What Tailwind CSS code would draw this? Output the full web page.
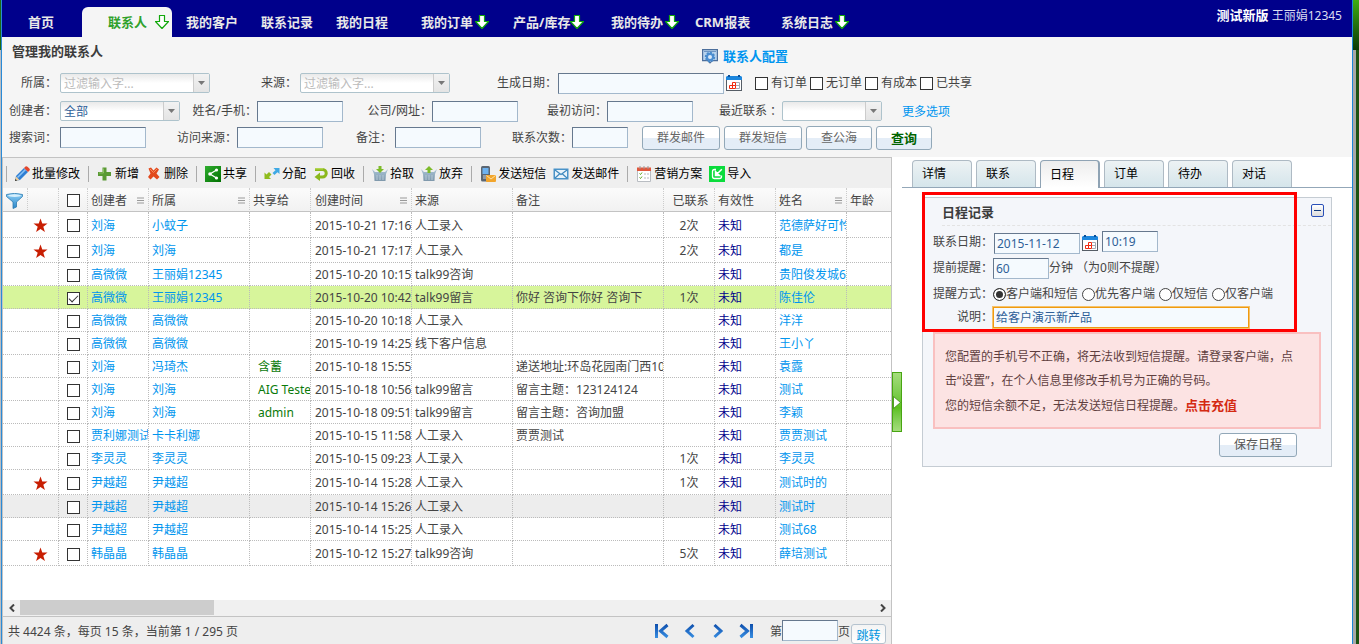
<!DOCTYPE html>
<html lang="zh-CN">
<head>
<meta charset="utf-8">
<title>管理我的联系人</title>
<script src="https://cdn.jsdelivr.net/npm/@tailwindcss/browser@4"></script>
</head>
<body class="flex min-h-screen bg-white font-['Noto_Sans','Noto_Sans_CJK_SC',sans-serif] text-[12px] leading-4 text-[#444] overflow-hidden">

<svg class="absolute size-0" aria-hidden="true">
  <defs>
    <linearGradient id="gBlue" x1="0" y1="0" x2="0" y2="1"><stop offset="0" stop-color="#8fd0f7"/><stop offset="1" stop-color="#2a86c8"/></linearGradient>
    <linearGradient id="gPager" x1="0" y1="0" x2="0" y2="16" gradientUnits="userSpaceOnUse"><stop offset="0" stop-color="#0a49a8"/><stop offset="1" stop-color="#3b93e6"/></linearGradient>
    <linearGradient id="gShare" x1="0" y1="0" x2="1" y2="1"><stop offset="0" stop-color="#2fae2f"/><stop offset="1" stop-color="#027002"/></linearGradient>
    <linearGradient id="gBin" x1="0" y1="0" x2="0" y2="1"><stop offset="0" stop-color="#a9c3d6"/><stop offset="1" stop-color="#7f98ab"/></linearGradient>
  </defs>
  <symbol id="down" viewBox="0 0 14 14"><path d="M4.5.5h5v6h4L7 13.5.5 6.5h4z" stroke="#12a80c" stroke-width="1.2" stroke-linejoin="round"/></symbol>
  <symbol id="cal" viewBox="0 0 16 16"><rect x=".5" y="3.5" width="15" height="12" fill="#fff" stroke="#555d66"/><path d="M0 2l1-1h14l1 1v3H0z" fill="#1c86dd"/><path d="M2 0h2v2H2zM12 0h2v2h-2z" fill="#0c4e96"/><path d="M3.500 10.500h3v3h-3zM6.500 7.500h3v3h-3zM6.500 10.500h3v3h-3z" fill="#fff" stroke="#f22a10" stroke-width="1"/><path d="M10 7.500h3.500v6H10M10 10.500h3.500" fill="none" stroke="#a4abb5" stroke-width="1"/></symbol>
  <symbol id="star" viewBox="0 0 16 16"><path d="M8 .5l1.900 5.300 5.600.1-4.500 3.400 1.700 5.700L8 11.800 3.300 15 5 9.300.5 5.900l5.600-.1z" fill="#c81e02"/></symbol>
  <symbol id="menu" viewBox="0 0 7 7"><path d="M0 1h7M0 3.500h7M0 6h7" stroke="#999" stroke-width="1"/></symbol>
</svg>

<!-- left window edge -->
<div class="flex w-[2px] shrink-0 flex-col border-r border-[#2a8ad6]">
  <div class="h-[50px] bg-[#1d6b10]"></div>
  <div class="flex-1 bg-[#b9bec4]"></div>
</div>

<div class="flex min-w-0 flex-1 flex-col">
  <!-- top navigation -->
  <header class="flex h-[37px] bg-[#00008b] text-white">
    <nav class="flex min-w-0 flex-1 items-end text-[13px] font-bold leading-[30px] whitespace-nowrap [&>a]:h-[30px] [&>a]:shrink-0 [&>a]:flex [&>a]:items-center [&_svg]:size-[14px] [&_svg]:fill-white">
      <a href="#" class="w-[80px] pl-[26px] text-[#e8e8e8]">首页</a>
      <a href="#" class="w-[90px] justify-end gap-[8px] rounded-t-[6px] bg-[#f5f5f5] pr-[3px] text-[#2fa12b]">联系人<svg><use href="#down"/></svg></a>
      <a href="#" class="w-[75px] pl-[14px] text-[#e8e8e8]">我的客户</a>
      <a href="#" class="w-[75px] pl-[14px] text-[#e8e8e8]">联系记录</a>
      <a href="#" class="w-[75px] pl-[14px] text-[#e8e8e8]">我的日程</a>
      <a href="#" class="w-[102px] gap-[2px] pl-[24px] text-[#e8e8e8]">我的订单<svg><use href="#down"/></svg></a>
      <a href="#" class="w-[98px] pl-[14px] text-[#e8e8e8]">产品/库存<svg><use href="#down"/></svg></a>
      <a href="#" class="w-[84px] gap-[2px] pl-[14px] text-[#e8e8e8]">我的待办<svg><use href="#down"/></svg></a>
      <a href="#" class="w-[86px] pl-[14px] text-[#e8e8e8]">CRM报表</a>
      <a href="#" class="w-[84px] gap-[2px] pl-[14px] text-[#e8e8e8]">系统日志<svg><use href="#down"/></svg></a>
    </nav>
    <div class="pt-[7px] pr-[10px] whitespace-nowrap text-[#dcdcf0]"><b class="text-[13px] text-white">测试新版</b> 王丽娟12345</div>
  </header>

  <!-- search form -->
  <form class="flex h-[120px] flex-col bg-[#f5f5f5] whitespace-nowrap [&_input[type=text]]:border [&_input[type=text]]:border-t-[#66788e] [&_input[type=text]]:border-l-[#66788e] [&_input[type=text]]:border-r-[#a3b8cc] [&_input[type=text]]:border-b-[#a3b8cc] [&_input[type=text]]:h-[21px] [&_input[type=text]]:bg-[#f5fafe] [&_input[type=text]]:px-1 [&_label]:shrink-0">
    <div class="flex h-[32px] items-center">
      <h1 class="w-[700px] pb-[4px] pl-[10px] text-[13px] font-bold text-[#3c3c3c]">管理我的联系人</h1>
      <a href="#" class="flex items-center gap-[5px] pt-[6px] text-[13px] font-bold text-[#0095f0]">
        <svg class="h-[15px] w-[16px]" viewBox="0 0 16 15"><path d="M.6.6h14.800v11h-5L8 14l-2.400-2.400h-5z" fill="#b9d4ee" stroke="#4d6f9c" stroke-width="1.200"/><path d="M2 2.500h12" stroke="#6e95c4"/><circle cx="8" cy="8" r="4.200" fill="#4d8fd3" stroke="#4a8ccc" stroke-dasharray="2 1.200" stroke-width="2"/><circle cx="8" cy="8" r="2" fill="#dbeaf8"/></svg>联系人配置</a>
    </div>
    <div class="flex h-[28px] items-center">
      <label for="owner" class="w-[58px] pr-[3px] text-right">所属：</label>
      <span class="flex h-[20px] w-[150px] rounded-[2px] border border-[#aec3cc] bg-linear-to-b from-[#e9e9e9] via-white to-white">
        <input id="owner" type="search" placeholder="过滤输入字..." class="min-w-0 flex-1 bg-transparent pt-[2px] pl-[3px] outline-none placeholder:text-[#bbb]">
        <button type="button" aria-label="展开所属" class="flex w-[16px] items-center justify-center border-l border-[#ccc] bg-linear-to-b from-[#f2f2f2] to-[#e4e4e4]"><svg class="h-[4px] w-[7px]" viewBox="0 0 7 4"><path d="M0 0h7L3.500 4z" fill="#777"/></svg></button>
      </span>
      <label for="src" class="w-[90px] pr-[3px] text-right">来源：</label>
      <span class="flex h-[20px] w-[150px] rounded-[2px] border border-[#aec3cc] bg-linear-to-b from-[#e9e9e9] via-white to-white">
        <input id="src" type="search" placeholder="过滤输入字..." class="min-w-0 flex-1 bg-transparent pt-[2px] pl-[3px] outline-none placeholder:text-[#bbb]">
        <button type="button" aria-label="展开来源" class="flex w-[16px] items-center justify-center border-l border-[#ccc] bg-linear-to-b from-[#f2f2f2] to-[#e4e4e4]"><svg class="h-[4px] w-[7px]" viewBox="0 0 7 4"><path d="M0 0h7L3.500 4z" fill="#777"/></svg></button>
      </span>
      <label for="made" class="w-[108px] pr-[1px] text-right">生成日期：</label>
      <input id="made" type="text" class="w-[166px]">
      <button type="button" aria-label="选择日期" class="ml-[2px]"><svg class="size-[16px]"><use href="#cal"/></svg></button>
      <span class="ml-[13px] flex gap-[3px] [&>label]:flex [&>label]:items-center [&>label]:gap-[3px] [&_input]:size-[13px] [&_input]:appearance-none [&_input]:border [&_input]:border-[#333] [&_input]:bg-white">
        <label><input type="checkbox">有订单</label>
        <label><input type="checkbox">无订单</label>
        <label><input type="checkbox">有成本</label>
        <label><input type="checkbox">已共享</label>
      </span>
    </div>
    <div class="flex h-[28px] items-center">
      <label for="creator" class="w-[58px] pr-[3px] text-right">创建者：</label>
      <span class="flex h-[20px] w-[120px] rounded-[2px] border border-[#aec3cc] bg-linear-to-b from-[#e9e9e9] via-white to-white">
        <select id="creator" class="min-w-0 flex-1 appearance-none bg-transparent pt-[2px] pl-[3px] text-[#2f5f98]"><option>全部</option></select>
        <span class="flex w-[16px] items-center justify-center border-l border-[#ccc] bg-linear-to-b from-[#f2f2f2] to-[#e4e4e4]"><svg class="h-[4px] w-[7px]" viewBox="0 0 7 4"><path d="M0 0h7L3.500 4z" fill="#777"/></svg></span>
      </span>
      <label for="name" class="w-[77px] text-right">姓名/手机：</label>
      <input id="name" type="text" class="w-[86px]">
      <label for="comp" class="w-[89px] text-right">公司/网址：</label>
      <input id="comp" type="text" class="w-[86px]">
      <label for="first" class="w-[89px] text-right">最初访问：</label>
      <input id="first" type="text" class="w-[86px]">
      <label for="recent" class="w-[89px] text-right">最近联系 ：</label>
      <span class="flex h-[20px] w-[100px] rounded-[2px] border border-[#aec3cc] bg-linear-to-b from-[#e9e9e9] via-white to-white">
        <select id="recent" class="min-w-0 flex-1 appearance-none bg-transparent"><option></option></select>
        <span class="flex w-[16px] items-center justify-center border-l border-[#ccc] bg-linear-to-b from-[#f2f2f2] to-[#e4e4e4]"><svg class="h-[4px] w-[7px]" viewBox="0 0 7 4"><path d="M0 0h7L3.500 4z" fill="#777"/></svg></span>
      </span>
      <a href="#" class="ml-[20px] pt-[2px] text-[#0095f0]">更多选项</a>
    </div>
    <div class="flex h-[25px] items-center [&_button]:h-[24px] [&_button]:rounded-[3px] [&_button]:border [&_button]:border-[#92a8b8] [&_button]:bg-linear-to-b [&_button]:from-white [&_button]:from-50% [&_button]:to-[#e4edf7] [&_button]:to-50%">
      <label for="kw" class="w-[58px] pr-[3px] text-right">搜索词：</label>
      <input id="kw" type="text" class="w-[86px]">
      <label for="visit" class="w-[91px] text-right">访问来源：</label>
      <input id="visit" type="text" class="w-[86px]">
      <label for="memo" class="w-[72px] pr-[3px] text-right">备注：</label>
      <input id="memo" type="text" class="w-[86px]">
      <label for="times" class="w-[91px] text-right">联系次数：</label>
      <input id="times" type="text" class="w-[56px]">
      <div class="ml-[14px] flex gap-[4px] text-[#666]">
        <button type="button" class="w-[78px]">群发邮件</button>
        <button type="button" class="w-[78px]">群发短信</button>
        <button type="button" class="w-[66px]">查公海</button>
        <button type="button" class="w-[56px] text-[13px] font-bold text-[#006400]">查询</button>
      </div>
    </div>
  </form>

  <main class="grid flex-1 grid-cols-[890fr_460fr]">
    <!-- contact grid -->
    <section class="relative flex min-w-0 flex-col border border-b-0 border-[#c3c3c3]">
      <div class="flex h-[30px] items-center gap-[7px] bg-[#efefef] pt-[1px] pl-[3px] whitespace-nowrap text-black [&>button]:flex [&>button]:shrink-0 [&>button]:items-center [&>button]:gap-[2px] [&_svg]:size-[16px] [&>i]:mx-px [&>i]:h-[16px] [&>i]:w-px [&>i]:bg-[#aaa]">
        <i class="mx-0!"></i>
        <button type="button"><svg viewBox="0 0 16 16"><path d="M1 15l1-5 8-8 4 4-8 8z" fill="#2f7fd4"/><path d="M3.500 11.500l8-8" stroke="#8cc3f4" stroke-width="1.600"/><path d="M10 2l1.500-1.500q1-.8 2 .2l1.800 1.800q1 1 .2 2L14 6z" fill="#e2462c"/><path d="M1 15l1-4.500 3.500 3.500z" fill="#f2cf9a"/><path d="M1 15l.5-2 1.500 1.500z" fill="#222"/></svg>批量修改</button>
        <i></i>
        <button type="button"><svg viewBox="0 0 16 16"><path d="M5.500 1.500h4v4.500h4.500v4h-4.500v4.500h-4v-4.500H1v-4h4.500z" fill="#5a9a35"/><path d="M6.500 2.500v4.500H2" stroke="#8cc063" fill="none"/></svg>新增</button>
        <button type="button"><svg viewBox="0 0 16 16"><path d="M2.500 2.500L5 1.500l2.500 3 3-3 2.500 2L10.500 7.500l3 3.500-2.500 2.500-3.500-3-3 3L2 11l2.500-3.500z" fill="#e2491c"/><path d="M4 3l3.500 3.500L11 3" stroke="#f58a5c" fill="none"/></svg>删除</button>
        <i></i>
        <button type="button"><svg viewBox="0 0 16 16"><path d="M0 0h16v16H0z" fill="url(#gShare)"/><path d="M11.500 4L5 8l6.500 4" fill="none" stroke="#fff" stroke-width="1.300"/><circle cx="11.500" cy="4" r="1.600" fill="#fff"/><circle cx="5" cy="8" r="1.800" fill="#fff"/><circle cx="11.500" cy="12" r="1.600" fill="#fff"/></svg>共享</button>
        <i></i>
        <button type="button"><svg viewBox="0 0 16 16"><path d="M15.500 2v6l-2-1.800L10.500 9 8.500 7l3-2.800L9.500 2z" fill="#3fa9e4"/><path d="M.5 13V6.500L2.500 8.500 5 6l2.500 2.500L5 11l2 2z" fill="#8fbc1e"/></svg>分配</button>
        <button type="button"><svg viewBox="0 0 16 16"><path d="M2 3.500h7.500a3.500 3.500 0 010 7.500H6" fill="none" stroke="#8bb81c" stroke-width="3"/><path d="M7 6.500v8.500L1.500 11z" fill="#8bb81c"/><path d="M2 2.800h8" stroke="#c5e36b"/></svg>回收</button>
        <i></i>
        <button type="button"><svg viewBox="0 0 16 16"><path d="M0 3l3 3h10l3-3-2 5-.5 7h-11L2 8z" fill="url(#gBin)"/><path d="M5 9v5M8 9v5M11 9v5" stroke="#b5c8d6"/><path d="M6.500 0h3v3H12L8 7 4 3h2.500z" fill="#7dbb2a"/></svg>拾取</button>
        <button type="button"><svg viewBox="0 0 16 16"><path d="M0 3l3 3h10l3-3-2 5-.5 7h-11L2 8z" fill="url(#gBin)"/><path d="M5 9v5M8 9v5M11 9v5" stroke="#b5c8d6"/><path d="M6.500 7h3V4H12L8 0 4 4h2.500z" fill="#7dbb2a"/></svg>放弃</button>
        <i></i>
        <button type="button"><svg viewBox="0 0 16 16"><rect x="1" y="0" width="9" height="15.500" rx="1.500" fill="#5b6672"/><rect x="2.500" y="2" width="6" height="6" fill="#6db2f0"/><path d="M3 10h5M3 12h3" stroke="#c8d0d8"/><rect x="6" y="9" width="10" height="7" rx="1" fill="#f2a52c"/><path d="M6.500 9.500L11 13l4.500-3.500" fill="none" stroke="#fde0a3"/></svg>发送短信</button>
        <button type="button"><svg viewBox="0 0 16 16"><path d="M.5 2.500h15v11H.5z" fill="#4a93c8"/><rect x="2" y="4" width="12" height="8" fill="#e9f3fa"/><path d="M2 4l6 4.500L14 4M2 12l4.500-4M14 12L9.500 8" fill="none" stroke="#3d87bd" stroke-width="1.200"/></svg>发送邮件</button>
        <i></i>
        <button type="button"><svg viewBox="0 0 16 16"><path d="M1.500 2.500h13v13h-13z" fill="#fff" stroke="#b9bdc2"/><path d="M1 1.500h14V5H1z" fill="#e0573c"/><path d="M4 0v3M8 0v3M12 0v3" stroke="#999"/><path d="M3.500 7.500l1 1 1.500-2M3.500 11.500l1 1 1.500-2" fill="none" stroke="#58a618"/><path d="M8 8h5M8 12h5" stroke="#b4b8bd" stroke-dasharray="2 1"/></svg>营销方案</button>
        <button type="button"><svg viewBox="0 0 16 16"><path d="M0 0h16v16H0z" fill="#0bdc3c"/><path d="M7 3.500H5.500q-2 0-2 2v5q0 2 2 2h5q2 0 2-2V9.500" fill="none" stroke="#fff" stroke-width="1.300"/><path d="M12.800 3.200L8 8M6.500 5.500v4h4z" stroke="#fff" stroke-width="1.500" fill="#fff"/></svg>导入</button>
      </div>

      <table class="w-full table-fixed border-separate border-spacing-0 whitespace-nowrap text-left [&_td]:overflow-hidden [&_td]:border-r [&_td]:border-b [&_td]:border-dotted [&_td]:border-[#bbb] [&_td]:pt-[2px] [&_td]:pl-[3px] [&_th]:overflow-hidden [&_th]:border-r [&_th]:border-r-[#ccc] [&_th]:[border-right-style:dotted] [&_th]:border-b [&_th]:border-b-[#c3c3c3] [&_th]:pt-[2px] [&_th]:pl-[3px] [&_th]:font-normal [&_tbody_tr]:h-[23px] [&_td:first-child]:border-r-0 [&_td:last-child]:border-r-0 [&_th:last-child]:border-r-0 [&_td:nth-child(2)]:pr-[9px] [&_td:nth-child(3)]:pl-[8px] [&_th:nth-child(3)]:pl-[8px] [&_td:nth-child(7)]:pl-[4px] [&_th:nth-child(7)]:pl-[4px] [&_td:nth-child(6)]:pl-[8px] [&_td:nth-child(6)]:text-[#0a7a0a] [&_td:nth-child(10)]:pl-0 [&_td:nth-child(10)]:text-center [&_td:nth-child(11)]:text-[#00008b] [&_a]:text-[#0095ee] [&_td_svg]:mx-auto [&_td_svg]:size-[15px] [&_input]:block [&_input]:size-[13px] [&_input]:appearance-none [&_input]:border [&_input]:border-[#333] [&_input]:bg-white">
        <colgroup><col class="w-[25px]"><col class="w-[31px]"><col class="w-[29px]"><col class="w-[61px]"><col class="w-[101px]"><col class="w-[61px]"><col class="w-[101px]"><col class="w-[101px]"><col class="w-[151px]"><col class="w-[51px]"><col class="w-[61px]"><col class="w-[71px]"><col></colgroup>
        <thead>
          <tr class="h-[24px] bg-linear-to-b from-[#fbfbfb] to-[#f1f1f1]">
            <th><button type="button" aria-label="筛选" class="block"><svg class="h-[16px] w-[17px]" viewBox="0 0 17 16"><path d="M.5 1.500Q8.500-.8 16.500 1.500v2L10.500 9v5L7 15.500V9L.5 3.500z" fill="url(#gBlue)" stroke="#2f7cb0" stroke-width=".8"/><ellipse cx="8.500" cy="2.600" rx="6.500" ry="1.300" fill="#d6effc"/></svg></button></th>
            <th></th>
            <th><input type="checkbox" aria-label="全选"></th>
            <th><span class="flex items-center justify-between pr-[4px]">创建者<svg class="size-[7px]"><use href="#menu"/></svg></span></th>
            <th><span class="flex items-center justify-between pr-[4px]">所属<svg class="size-[7px]"><use href="#menu"/></svg></span></th>
            <th>共享给</th>
            <th><span class="flex items-center justify-between pr-[4px]">创建时间<svg class="size-[7px]"><use href="#menu"/></svg></span></th>
            <th>来源</th>
            <th>备注</th>
            <th class="text-center">已联系</th>
            <th>有效性</th>
            <th><span class="flex items-center justify-between pr-[4px]">姓名<svg class="size-[7px]"><use href="#menu"/></svg></span></th>
            <th>年龄</th>
          </tr>
        </thead>
        <tbody>
          <tr class="h-[26px]!"><td></td><td><svg><use href="#star"/></svg></td><td><input type="checkbox" aria-label="选择"></td><td><a href="#">刘海</a></td><td><a href="#">小蚊子</a></td><td></td><td>2015-10-21 17:16</td><td>人工录入</td><td></td><td>2次</td><td>未知</td><td><a href="#">范德萨好可怜</a></td><td></td></tr>
          <tr class="h-[25px]!"><td></td><td><svg><use href="#star"/></svg></td><td><input type="checkbox" aria-label="选择"></td><td><a href="#">刘海</a></td><td><a href="#">刘海</a></td><td></td><td>2015-10-21 17:17</td><td>人工录入</td><td></td><td>2次</td><td>未知</td><td><a href="#">都是</a></td><td></td></tr>
          <tr><td></td><td></td><td><input type="checkbox" aria-label="选择"></td><td><a href="#">高微微</a></td><td><a href="#">王丽娟12345</a></td><td></td><td>2015-10-20 10:15</td><td>talk99咨询</td><td></td><td></td><td>未知</td><td><a href="#">贵阳俊发城6</a></td><td></td></tr>
          <tr class="bg-[#d7f59b]"><td></td><td></td><td><input type="checkbox" checked aria-label="选择" class="checked:before:mx-auto checked:before:block checked:before:h-[9px] checked:before:w-[5px] checked:before:rotate-45 checked:before:border-r checked:before:border-b checked:before:border-[#333] checked:before:content-['']"></td><td><a href="#">高微微</a></td><td><a href="#">王丽娟12345</a></td><td></td><td>2015-10-20 10:42</td><td>talk99留言</td><td>你好 咨询下你好 咨询下</td><td>1次</td><td>未知</td><td><a href="#">陈佳伦</a></td><td></td></tr>
          <tr><td></td><td></td><td><input type="checkbox" aria-label="选择"></td><td><a href="#">高微微</a></td><td><a href="#">高微微</a></td><td></td><td>2015-10-20 10:18</td><td>人工录入</td><td></td><td></td><td>未知</td><td><a href="#">洋洋</a></td><td></td></tr>
          <tr><td></td><td></td><td><input type="checkbox" aria-label="选择"></td><td><a href="#">高微微</a></td><td><a href="#">高微微</a></td><td></td><td>2015-10-19 14:25</td><td>线下客户信息</td><td></td><td></td><td>未知</td><td><a href="#">王小丫</a></td><td></td></tr>
          <tr><td></td><td></td><td><input type="checkbox" aria-label="选择"></td><td><a href="#">刘海</a></td><td><a href="#">冯琦杰</a></td><td>含蓄</td><td>2015-10-18 15:55</td><td></td><td>递送地址:环岛花园南门西10</td><td></td><td>未知</td><td><a href="#">袁露</a></td><td></td></tr>
          <tr><td></td><td></td><td><input type="checkbox" aria-label="选择"></td><td><a href="#">刘海</a></td><td><a href="#">刘海</a></td><td>AIG Tester</td><td>2015-10-18 10:56</td><td>talk99留言</td><td>留言主题：123124124</td><td></td><td>未知</td><td><a href="#">测试</a></td><td></td></tr>
          <tr><td></td><td></td><td><input type="checkbox" aria-label="选择"></td><td><a href="#">刘海</a></td><td><a href="#">刘海</a></td><td>admin</td><td>2015-10-18 09:51</td><td>talk99留言</td><td>留言主题：咨询加盟</td><td></td><td>未知</td><td><a href="#">李颖</a></td><td></td></tr>
          <tr><td></td><td></td><td><input type="checkbox" aria-label="选择"></td><td><a href="#">贾利娜测试</a></td><td><a href="#">卡卡利娜</a></td><td></td><td>2015-10-15 11:58</td><td>人工录入</td><td>贾贾测试</td><td></td><td>未知</td><td><a href="#">贾贾测试</a></td><td></td></tr>
          <tr><td></td><td></td><td><input type="checkbox" aria-label="选择"></td><td><a href="#">李灵灵</a></td><td><a href="#">李灵灵</a></td><td></td><td>2015-10-15 09:23</td><td>人工录入</td><td></td><td>1次</td><td>未知</td><td><a href="#">李灵灵</a></td><td></td></tr>
          <tr class="h-[25px]!"><td></td><td><svg><use href="#star"/></svg></td><td><input type="checkbox" aria-label="选择"></td><td><a href="#">尹越超</a></td><td><a href="#">尹越超</a></td><td></td><td>2015-10-14 15:28</td><td>人工录入</td><td></td><td>1次</td><td>未知</td><td><a href="#">测试时的</a></td><td></td></tr>
          <tr class="bg-[#ededed]"><td></td><td></td><td><input type="checkbox" aria-label="选择"></td><td><a href="#">尹越超</a></td><td><a href="#">尹越超</a></td><td></td><td>2015-10-14 15:26</td><td>人工录入</td><td></td><td></td><td>未知</td><td><a href="#">测试时</a></td><td></td></tr>
          <tr><td></td><td></td><td><input type="checkbox" aria-label="选择"></td><td><a href="#">尹越超</a></td><td><a href="#">尹越超</a></td><td></td><td>2015-10-14 15:25</td><td>人工录入</td><td></td><td></td><td>未知</td><td><a href="#">测试68</a></td><td></td></tr>
          <tr class="h-[25px]!"><td></td><td><svg><use href="#star"/></svg></td><td><input type="checkbox" aria-label="选择"></td><td><a href="#">韩晶晶</a></td><td><a href="#">韩晶晶</a></td><td></td><td>2015-10-12 15:27</td><td>talk99咨询</td><td></td><td>5次</td><td>未知</td><td><a href="#">薛培测试</a></td><td></td></tr>
        </tbody>
      </table>

      <!-- horizontal scroll bar -->
      <div class="mt-auto flex h-[16px] items-center bg-[#f0f0f0] pb-px">
        <button type="button" aria-label="向左滚动" class="flex w-[17px] justify-center"><svg class="h-[8px] w-[6px]" viewBox="0 0 6 8"><path d="M5 .5L1.500 4 5 7.500" fill="none" stroke="#444" stroke-width="2"/></svg></button>
        <div class="h-full flex-1"><div class="h-full w-[22.700%] bg-[#cdcdcd]"></div></div>
        <button type="button" aria-label="向右滚动" class="flex w-[17px] justify-center"><svg class="h-[8px] w-[6px]" viewBox="0 0 6 8"><path d="M1 .5L4.500 4 1 7.500" fill="none" stroke="#444" stroke-width="2"/></svg></button>
      </div>
      <footer class="flex h-[28px] items-center border-t border-[#c3c3c3] bg-[#eee] pl-[5px] whitespace-nowrap">
        <span class="flex-1 pt-[2px]">共 4424 条，每页 15 条，当前第 1 / 295 页</span>
        <div class="flex gap-[12px] [&_svg]:size-[16px]" role="group" aria-label="分页">
          <button type="button" aria-label="首页"><svg viewBox="0 0 16 16"><path d="M2.500 1v14M13.500 2L6.500 8l7 6" fill="none" stroke="url(#gPager)" stroke-width="3"/></svg></button>
          <button type="button" aria-label="上一页"><svg viewBox="0 0 16 16"><path d="M11.500 2L5 8l6.500 6" fill="none" stroke="url(#gPager)" stroke-width="3"/></svg></button>
          <button type="button" aria-label="下一页"><svg viewBox="0 0 16 16"><path d="M4.500 2L11 8l-6.500 6" fill="none" stroke="url(#gPager)" stroke-width="3"/></svg></button>
          <button type="button" aria-label="末页"><svg viewBox="0 0 16 16"><path d="M13.500 1v14M2.500 2l7 6-7 6" fill="none" stroke="url(#gPager)" stroke-width="3"/></svg></button>
        </div>
        <label for="page" class="ml-[16px] pt-[2px]">第</label>
        <input id="page" type="text" class="h-[21px] w-[56px] border border-t-[#66788e] border-r-[#a3b8cc] border-b-[#a3b8cc] border-l-[#66788e] bg-[#f5fafe] px-1">
        <span class="pt-[2px]">页</span>
        <button type="button" class="mr-[5px] ml-[1px] h-[20px] w-[35px] self-end rounded-[3px] border border-[#b5c3cf] bg-linear-to-b from-[#f4f4f4] to-white pt-[3px] text-[#0095e0]">跳转</button>
      </footer>

      <!-- panel collapse handle -->
      <button type="button" aria-label="收起面板" class="absolute top-[214px] -right-[11px] flex h-[60px] w-[10px] items-center border border-[#48a512] bg-linear-to-b from-[#a5dd7c] via-[#5cc01c] via-60% to-[#a5dd7c]"><svg class="h-[13px] w-[8px] shrink-0" viewBox="0 0 8 13"><path d="M.5.500L7.500 6.500.5 12.500z" fill="#fff" stroke="#3a8a10" stroke-width=".8"/></svg></button>
    </section>

    <!-- detail panel -->
    <section class="min-w-0 pt-[3px] pl-[10px]">
      <div role="tablist" class="flex h-[28px] gap-[4px] border-b border-[#93a7b8] pl-[10px] text-left text-black [&_button]:w-[60px] [&_button]:rounded-t-[4px] [&_button]:border [&_button]:border-b-0 [&_button]:border-[#aebac4] [&_button]:pl-[9px] [&_button]:text-left">
        <button type="button" role="tab" class="bg-linear-to-b from-[#edf2f4] to-[#d5e5eb]">详情</button>
        <button type="button" role="tab" class="bg-linear-to-b from-[#edf2f4] to-[#d5e5eb]">联系</button>
        <button type="button" role="tab" aria-selected="true" class="-mb-px border-r-2! border-[#8fa3b4]! bg-linear-to-b from-[#ededed] to-white">日程</button>
        <button type="button" role="tab" class="bg-linear-to-b from-[#edf2f4] to-[#d5e5eb]">订单</button>
        <button type="button" role="tab" class="bg-linear-to-b from-[#edf2f4] to-[#d5e5eb]">待办</button>
        <button type="button" role="tab" class="bg-linear-to-b from-[#edf2f4] to-[#d5e5eb]">对话</button>
      </div>

      <form class="relative mt-[9px] mr-[20px] ml-[20px] border border-[#c5ccd3] bg-[#f4f6fa] pb-[9px] whitespace-nowrap [&_input[type=text]]:border [&_input[type=text]]:border-t-[#66788e] [&_input[type=text]]:border-l-[#66788e] [&_input[type=text]]:border-r-[#a3b8cc] [&_input[type=text]]:border-b-[#a3b8cc] [&_input[type=text]]:h-[21px] [&_input[type=text]]:bg-[#f5fafe] [&_input[type=text]]:px-[2px] [&_input[type=text]]:text-[#2f5f98]">
        <div class="ml-[19px] flex h-[28px] items-center justify-between border-b border-dashed border-[#e3e3e3] pr-[7px]">
          <h2 class="text-[13px] font-bold text-[#3c3c3c]">日程记录</h2>
          <button type="button" aria-label="折叠" class="mb-[2px] flex size-[13px] items-center justify-center rounded-[2px] border border-[#2a50b8] bg-linear-to-b from-white to-[#dcdcdc]"><span class="h-px w-[7px] bg-[#123a78]"></span></button>
        </div>
        <div class="mt-[4px] ml-[10px] flex flex-col gap-px [&>div]:flex [&>div]:h-[24px] [&>div]:items-center [&>div>label:first-child]:w-[60px] [&>div>label:first-child]:text-right">
          <div><label for="date">联系日期：</label><input id="date" type="text" value="2015-11-12" class="mt-[2px] ml-[1px] w-[86px]">
            <button type="button" aria-label="选择日期" class="mt-[2px] ml-[2px]"><svg class="size-[16px]"><use href="#cal"/></svg></button>
            <input type="text" value="10:19" aria-label="时间" class="mb-[2px] ml-[4px] w-[56px]"></div>
          <div class="h-[25px]!"><label for="remind">提前提醒：</label><input id="remind" type="text" value="60" class="mt-[2px] w-[56px]"><span>分钟 （为0则不提醒）</span></div>
          <div role="radiogroup" aria-label="提醒方式" class="gap-[4px] pt-[2px] [&_input]:size-[13px] [&_input]:appearance-none [&_input]:rounded-full [&_input]:border [&_input]:border-[#444] [&_input]:bg-white [&_input:checked]:border-[#333] [&_input:checked]:bg-[#333] [&_input:checked]:shadow-[inset_0_0_0_2px_#fff]">
            <span class="-mr-[4px] w-[60px]">提醒方式：</span>
            <span class="flex items-center"><input id="r1" type="radio" name="way" checked><label for="r1">客户端和短信</label></span>
            <span class="flex items-center"><input id="r2" type="radio" name="way"><label for="r2">优先客户端</label></span>
            <span class="flex items-center"><input id="r3" type="radio" name="way"><label for="r3">仅短信</label></span>
            <span class="flex items-center"><input id="r4" type="radio" name="way"><label for="r4">仅客户端</label></span>
          </div>
          <div class="h-[22px]!"><label for="note">说明：</label><input id="note" type="text" value="给客户演示新产品" class="w-[256px] border-[#f09a10]! outline outline-[#f5c26b]"></div>
        </div>
        <div class="mt-[4px] mr-[10px] ml-[10px] border-2 border-[#f9c0c0] bg-[#fce3e3] pt-[11px] pr-[20px] pb-[9px] pl-[10px] leading-[24px] whitespace-normal text-[#5f3f3f]">
          <p>您配置的手机号不正确，将无法收到短信提醒。请登录客户端，点击“设置”，在个人信息里修改手机号为正确的号码。</p>
          <p>您的短信余额不足，无法发送短信日程提醒。<a href="#" class="text-[13px] font-bold text-[#d42a12]">点击充值</a></p>
        </div>
        <div class="mt-[4px] mr-[34px] flex justify-end">
          <button type="button" class="h-[24px] w-[78px] rounded-[3px] border border-[#92a8b8] bg-linear-to-b from-white from-50% to-[#e4edf7] to-50% text-[#555]">保存日程</button>
        </div>
        <!-- highlight frame over the reminder fields -->
        <div class="pointer-events-none absolute -top-[6px] right-[34px] -left-px h-[140px] border-3 border-[#f00]"></div>
      </form>
    </section>
  </main>
</div>

<!-- right window edge -->
<div class="flex w-[7px] shrink-0 flex-col border-l border-[#1c86d8]">
  <div class="h-[50px] bg-linear-to-b from-[#3fae10] to-[#0c3a06]"></div>
  <div class="flex-1 border-l-3 border-[#a8a8a8] bg-[#1c5212]"></div>
</div>
</body>
</html>
